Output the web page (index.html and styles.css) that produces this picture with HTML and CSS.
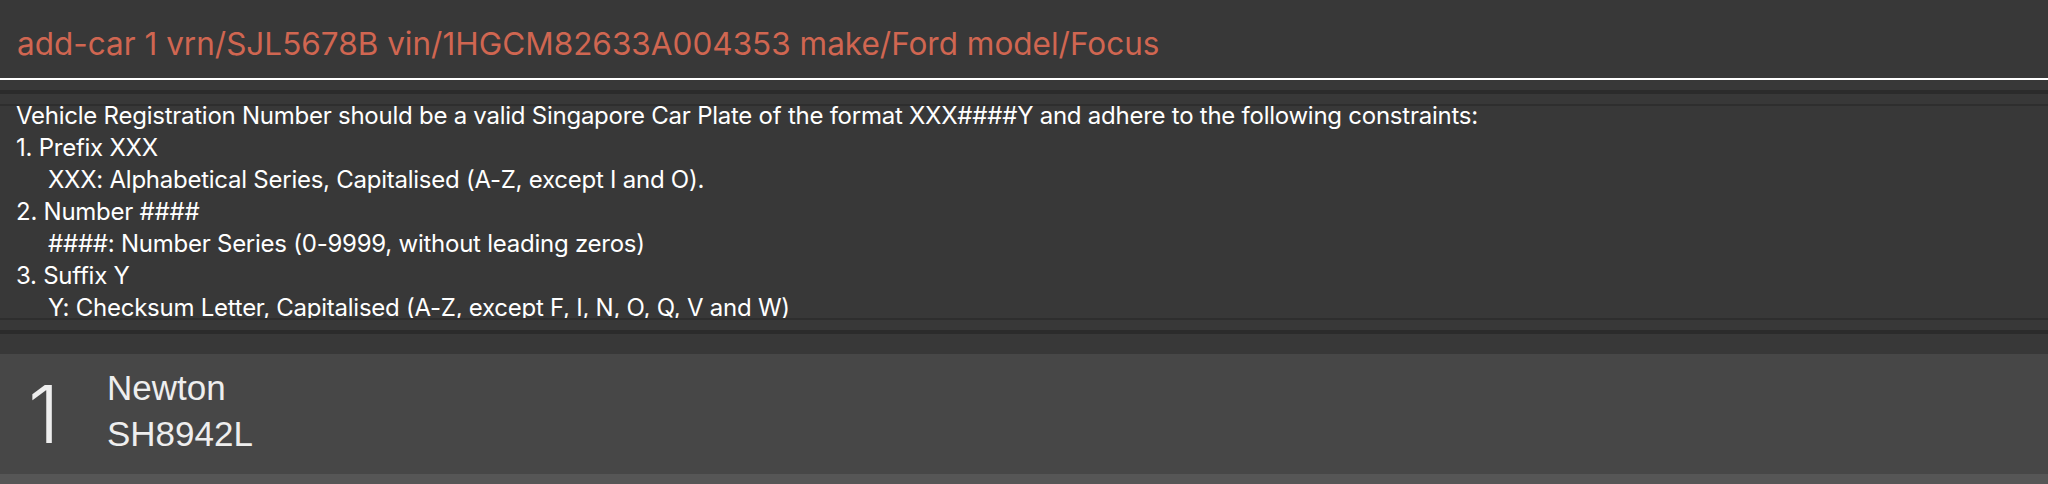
FILE: index.html
```html
<!DOCTYPE html>
<html>
<head>
<meta charset="utf-8">
<link rel="stylesheet" href="styles.css">
</head>
<body>
<div class="app">
  <div class="command-box">
    <div class="command-text">add-car 1 vrn/SJL5678B vin/1HGCM82633A004353 make/Ford model/Focus</div>
  </div>
  <div class="gap-top"></div>
  <div class="band"></div>
  <div class="result-pane">
    <div class="result-box">
      <div class="result-text">
        <div class="line">Vehicle Registration Number should be a valid Singapore Car Plate of the format XXX####Y and adhere to the following constraints:</div>
        <div class="line">1. Prefix XXX</div>
        <div class="line indent">XXX: Alphabetical Series, Capitalised (A-Z, except I and O).</div>
        <div class="line">2. Number ####</div>
        <div class="line indent">####: Number Series (0-9999, without leading zeros)</div>
        <div class="line">3. Suffix Y</div>
        <div class="line indent">Y: Checksum Letter, Capitalised (A-Z, except F, I, N, O, Q, V and W)</div>
      </div>
    </div>
  </div>
  <div class="band"></div>
  <div class="list-pane">
    <div class="cell">
      <div class="cell-index">1</div>
      <div class="cell-info">
        <div class="cell-name">Newton</div>
        <div class="cell-plate">SH8942L</div>
      </div>
    </div>
    <div class="cell-next"></div>
  </div>
</div>
</body>
</html>
```
FILE: styles.css
```css
html, body {
  margin: 0;
  padding: 0;
  background: #383838;
  width: 2048px;
  height: 484px;
  overflow: hidden;
}
.app {
  display: flex;
  flex-direction: column;
  font-family: Inter, "Liberation Sans", sans-serif;
}
.command-box {
  height: 78px;
  border-bottom: 2px solid #ffffff;
  background: #383838;
  display: flex;
  align-items: flex-start;
  padding-left: 17px;
}
.command-text {
  color: #d06651;
  font-size: 31.5px;
  line-height: 30px;
  margin-top: 29px;
  white-space: nowrap;
}
.gap-top {
  height: 10px;
}
.band {
  height: 4px;
  background: #2b2b2b;
}
.result-pane {
  padding: 10px 0;
}
.result-box {
  height: 212px;
  border-top: 2px solid #2e2e2e;
  border-bottom: 2px solid #2e2e2e;
  overflow: hidden;
}
.result-text {
  margin-top: -6px;
  padding-left: 16px;
  color: #ffffff;
  font-size: 24px;
  line-height: 32px;
  letter-spacing: -0.25px;
  white-space: nowrap;
}
.indent {
  padding-left: 32px;
}
.list-pane {
  padding-top: 20px;
  display: flex;
  flex-direction: column;
}
.cell {
  height: 120px;
  background: #474747;
  display: flex;
  align-items: flex-start;
  color: #eeeeee;
}
.cell-index {
  width: 107px;
  padding-left: 28px;
  margin-top: 20px;
  box-sizing: border-box;
  font-family: Inter, sans-serif;
  font-size: 80px;
  font-weight: 300;
  line-height: 80px;
}
.cell-info {
  display: flex;
  flex-direction: column;
  gap: 11px;
  padding-top: 16px;
  font-family: "Liberation Sans", Arial, sans-serif;
}
.cell-name, .cell-plate {
  font-size: 35px;
  line-height: 35px;
}
.cell-next {
  height: 10px;
  background: #565656;
}
```
